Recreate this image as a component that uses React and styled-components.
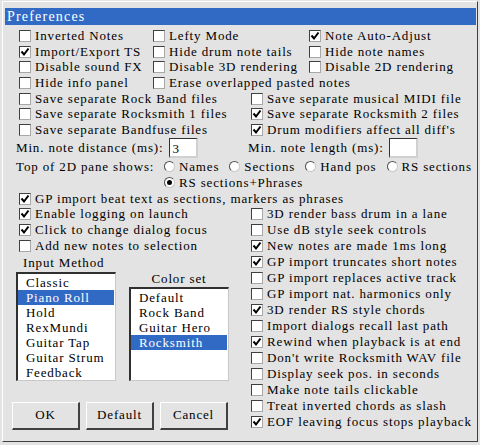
import React from "react";
import styled, { createGlobalStyle } from "styled-components";

const Global = createGlobalStyle`
  html, body {
    margin: 0;
    background: #e3e3e3;
    font-family: "Liberation Serif", "Times New Roman", serif;
    font-size: 13px;
    letter-spacing: 0.85px;
    color: #000;
  }
  * { box-sizing: border-box; }
`;

const Window = styled.div`
  margin: 1px 0 0 2px;
  width: 476px;
  height: 441px;
  border-top: 1px solid #fff;
  border-left: 1px solid #fff;
  border-right: 1px solid #404040;
  border-bottom: 1px solid #404040;
  padding: 6px 0 0 2px;
  display: flex;
  flex-direction: column;
`;

const TitleBar = styled.div`
  height: 17px;
  width: 471px;
  background: #316ac5;
  color: #fff;
  display: flex;
  align-items: center;
  padding-left: 2px;
  font-size: 14px;
  letter-spacing: 1.2px;
`;

const Body = styled.div`
  padding: 3px 0 0 11px;
  display: flex;
  flex-direction: column;
`;

const Grid = styled.div`
  display: grid;
  grid-template-columns: ${p => p.$cols};
`;

const Row = styled.div`
  height: ${p => p.$h || 15.7}px;
  display: flex;
  align-items: center;
  white-space: nowrap;
  grid-column: ${p => p.$span || "auto"};
`;

const Box = styled.span`
  width: 12px;
  height: 12px;
  margin: 0 4px 0 3px;
  background: #fff;
  border-style: solid;
  border-width: 1px;
  border-color: #404040 #a8a8a8 #a8a8a8 #404040;
  display: inline-flex;
  align-items: center;
  justify-content: center;
  flex: none;
`;

const Check = ({ on, children, span, h }) => (
  <Row $span={span} $h={h}>
    <Box>
      {on && (
        <svg width="10" height="10" viewBox="0 0 10 10">
          <polyline points="1.5,4.5 4,7.5 8.5,1.5" fill="none" stroke="#000" strokeWidth="2" />
        </svg>
      )}
    </Box>
    {children}
  </Row>
);

const FieldRow = styled.div`
  height: 21px;
  display: grid;
  grid-template-columns: 232px 1fr;
  align-items: center;
`;

const Field = styled.div`
  display: flex;
  align-items: center;
  white-space: nowrap;
`;

const Input = styled.div`
  width: 29px;
  height: 20px;
  margin-left: ${p => p.$gap}px;
  background: #fff;
  border-style: solid;
  border-width: 1px 2px 2px 1px;
  border-color: #303030 #d0d0d0 #d0d0d0 #303030;
  padding: 3px 0 0 3px;
  line-height: 14px;
`;

const PaneRow = styled.div`
  display: flex;
  align-items: flex-start;
`;

const PaneLabel = styled.div`
  width: 148px;
  height: 16px;
  display: flex;
  align-items: center;
  white-space: nowrap;
`;

const RadioGroup = styled.div`
  display: flex;
  flex-wrap: wrap;
  width: 312px;
  column-gap: 10px;
`;

const RadioItem = styled.div`
  height: 16px;
  display: flex;
  align-items: center;
  white-space: nowrap;
`;

const Dot = styled.span`
  width: 11px;
  height: 11px;
  border-radius: 50%;
  margin-right: 4px;
  background: #fff;
  border-style: solid;
  border-width: 1px;
  border-color: #505050 #c8c8c8 #c8c8c8 #505050;
  display: inline-flex;
  align-items: center;
  justify-content: center;
  flex: none;
  &::after {
    content: "";
    width: 5px;
    height: 5px;
    border-radius: 50%;
    background: ${p => (p.$on ? "#000" : "transparent")};
  }
`;

const Lower = styled.div`
  display: grid;
  grid-template-columns: 232px 1fr;
`;

const Column = styled.div`
  display: flex;
  flex-direction: column;
`;

const Lists = styled.div`
  display: flex;
  align-items: flex-end;
  gap: 13px;
`;

const ListGroup = styled.div`
  display: flex;
  flex-direction: column;
  align-items: ${p => (p.$center ? "center" : "flex-start")};
`;

const ListLabel = styled.div`
  height: ${p => p.$h}px;
  margin-left: ${p => p.$indent || 0}px;
  display: flex;
  align-items: center;
`;

const ListBox = styled.div`
  width: 100px;
  height: ${p => p.$h}px;
  background: #fff;
  border-style: solid;
  border-width: 2px 1px 1px 2px;
  border-color: #303030 #c8c8c8 #c8c8c8 #303030;
  padding: 1px 1px 0 0;
`;

const ListItem = styled.div`
  height: 15px;
  line-height: 15px;
  padding-left: 8px;
  white-space: nowrap;
  background: ${p => (p.$sel ? "#316ac5" : "transparent")};
  color: ${p => (p.$sel ? "#fff" : "#000")};
`;

const Buttons = styled.div`
  display: flex;
  gap: 6px;
  margin: 21px 0 0 -4px;
`;

const Button = styled.div`
  width: 68px;
  height: 28px;
  display: flex;
  align-items: center;
  justify-content: center;
  border-style: solid;
  border-width: 1px 2px 2px 1px;
  border-color: #fff #404040 #404040 #fff;
`;

const inputMethods = ["Classic", "Piano Roll", "Hold", "RexMundi", "Guitar Tap", "Guitar Strum", "Feedback"];
const colorSets = ["Default", "Rock Band", "Guitar Hero", "Rocksmith"];

const rightChecks = [
  ["3D render bass drum in a lane", false],
  ["Use dB style seek controls", false],
  ["New notes are made 1ms long", true],
  ["GP import truncates short notes", true],
  ["GP import replaces active track", false],
  ["GP import nat. harmonics only", false],
  ["3D render RS style chords", true],
  ["Import dialogs recall last path", false],
  ["Rewind when playback is at end", true],
  ["Don't write Rocksmith WAV file", false],
  ["Display seek pos. in seconds", false],
  ["Make note tails clickable", false],
  ["Treat inverted chords as slash", false],
  ["EOF leaving focus stops playback", true],
];

const App = () => (
  <>
    <Global />
    <Window>
      <TitleBar>Preferences</TitleBar>
      <Body>
        <Grid $cols="134px 156px 1fr">
          <Check>Inverted Notes</Check>
          <Check>Lefty Mode</Check>
          <Check on>Note Auto-Adjust</Check>
          <Check on>Import/Export TS</Check>
          <Check>Hide drum note tails</Check>
          <Check>Hide note names</Check>
          <Check>Disable sound FX</Check>
          <Check>Disable 3D rendering</Check>
          <Check>Disable 2D rendering</Check>
          <Check>Hide info panel</Check>
          <Check span="2 / 4">Erase overlapped pasted notes</Check>
        </Grid>
        <Grid $cols="232px 1fr">
          <Check>Save separate Rock Band files</Check>
          <Check>Save separate musical MIDI file</Check>
          <Check>Save separate Rocksmith 1 files</Check>
          <Check on>Save separate Rocksmith 2 files</Check>
          <Check>Save separate Bandfuse files</Check>
          <Check on>Drum modifiers affect all diff's</Check>
        </Grid>
        <FieldRow>
          <Field>
            Min. note distance (ms):
            <Input $gap={5}>3</Input>
          </Field>
          <Field>
            Min. note length (ms):
            <Input $gap={5} />
          </Field>
        </FieldRow>
        <PaneRow>
          <PaneLabel>Top of 2D pane shows:</PaneLabel>
          <RadioGroup>
            <RadioItem><Dot />Names</RadioItem>
            <RadioItem><Dot />Sections</RadioItem>
            <RadioItem><Dot />Hand pos</RadioItem>
            <RadioItem><Dot />RS sections</RadioItem>
            <RadioItem><Dot $on />RS sections+Phrases</RadioItem>
          </RadioGroup>
        </PaneRow>
        <Check on>GP import beat text as sections, markers as phrases</Check>
        <Lower>
          <Column>
            <Check on>Enable logging on launch</Check>
            <Check on>Click to change dialog focus</Check>
            <Check>Add new notes to selection</Check>
            <ListGroup>
              <ListLabel $h={18} $indent={7}>Input Method</ListLabel>
              <Lists>
                <ListBox $h={109}>
                  {inputMethods.map(m => (
                    <ListItem key={m} $sel={m === "Piano Roll"}>{m}</ListItem>
                  ))}
                </ListBox>
                <ListGroup $center>
                  <ListLabel $h={15}>Color set</ListLabel>
                  <ListBox $h={94}>
                    {colorSets.map(c => (
                      <ListItem key={c} $sel={c === "Rocksmith"}>{c}</ListItem>
                    ))}
                  </ListBox>
                </ListGroup>
              </Lists>
            </ListGroup>
            <Buttons>
              <Button>OK</Button>
              <Button>Default</Button>
              <Button>Cancel</Button>
            </Buttons>
          </Column>
          <Column>
            {rightChecks.map(([t, on]) => (
              <Check key={t} on={on} h={15.95}>{t}</Check>
            ))}
          </Column>
        </Lower>
      </Body>
    </Window>
  </>
);

export default App;
